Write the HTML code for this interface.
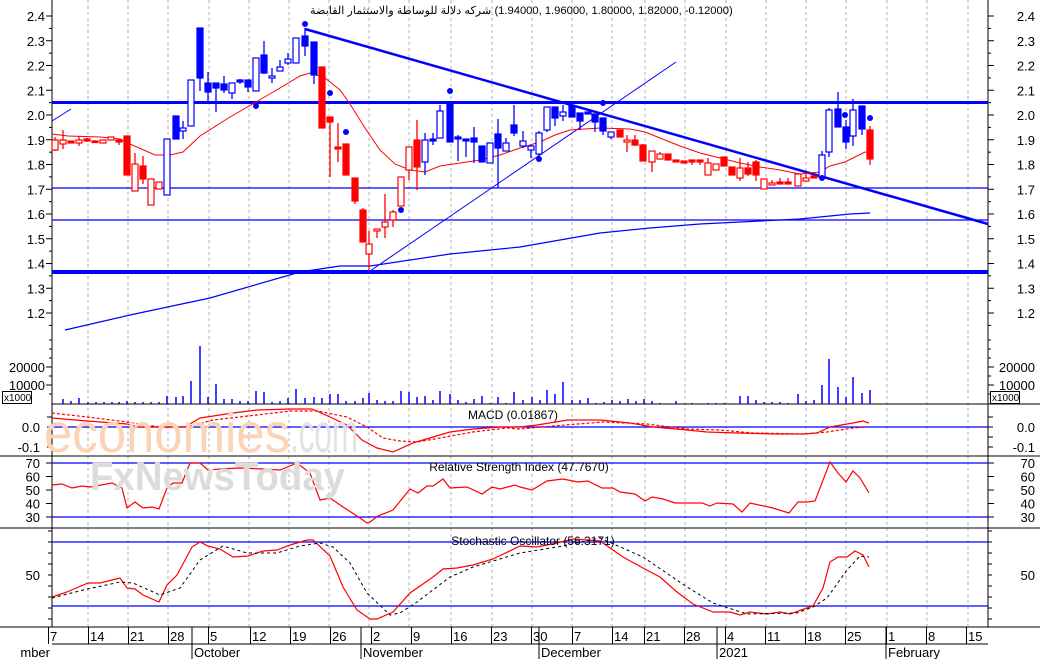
<!DOCTYPE html>
<html><head><meta charset="utf-8"><style>
html,body{margin:0;padding:0;background:#fff;width:1040px;height:659px;overflow:hidden}
svg{display:block}
text{font-family:"Liberation Sans",Arial,sans-serif;}
#title{position:absolute;left:310px;top:4px;font:11.2px "Liberation Sans","Noto Sans CJK SC",sans-serif;color:#000;white-space:nowrap;direction:ltr}
</style></head><body>
<div style="position:relative;width:1040px;height:659px">
<svg id="s" width="1040" height="659" xmlns="http://www.w3.org/2000/svg"></svg>
<div id="title"><span dir="rtl" style="unicode-bidi:isolate">شركه دلالة للوساطة والاستثمار القابضة</span> (1.94000, 1.96000, 1.80000, 1.82000, -0.12000)</div>
</div>
<script>
const S=document.getElementById('s');let h='';
const L=52,R=988;
function line(x1,y1,x2,y2,c,w,d){h+=`<line x1="${x1}" y1="${y1}" x2="${x2}" y2="${y2}" stroke="${c}" stroke-width="${w||1}" ${d?`stroke-dasharray="${d}"`:''}/>`;}
function pl(pts,c,w,d){h+=`<polyline fill="none" points="${pts.map(p=>p.join(',')).join(' ')}" stroke="${c}" stroke-width="${w||1}" ${d?`stroke-dasharray="${d}"`:''}/>`;}
function txt(x,y,t,a,sz,c){h+=`<text x="${x}" y="${y}" font-size="${sz||13}" text-anchor="${a||'start'}" fill="${c||'#000'}">${t}</text>`;}
const grid=[88,128,168,209,249,289,329,369,409,451,492,532,572,612,645,685,726,766,806,846,887,927,968];
grid.forEach(x=>line(x,0,x,627,'#b0b0b0',1,'3,3'));
line(L,0,L,627,'#000');line(R,0,R,627,'#000');
[404,456,528,627].forEach((y,i)=>line(i==0?L:0,y,1040,y,'#000'));
line(L,644,R,644,'#000');
for(let i=0;i<=12;i++){const p=2.4-i*0.1,y=16+i*24.75;if(p<1.15)continue;
 const t=p.toFixed(1);txt(45,y+5,t,'end');txt(1035,y+5,t,'end');
 line(L-6,y,L,y,'#000');line(R,y,R+6,y,'#000');
 line(L-3,y+12.4,L,y+12.4,'#000');line(R,y+12.4,R+3,y+12.4,'#000');}
[[20000,367],[10000,385]].forEach(a=>{txt(45,a[1]+5,a[0],'end');txt(1035,a[1]+5,a[0],'end');line(L-6,a[1],L,a[1],'#000');line(R,a[1],R+6,a[1],'#000');});
[340,349,358,376,394].forEach(y=>{line(L-3,y,L,y,'#000');line(R,y,R+3,y,'#000');});
h+=`<rect x="2.5" y="391.5" width="29" height="12" fill="#fff" stroke="#000"/>`;txt(4,401,'x1000','start',10);
h+=`<rect x="990.5" y="391.5" width="29" height="12" fill="#fff" stroke="#000"/>`;txt(992,401,'x1000','start',10);
txt(40,432,'0.0','end');txt(40,452,'-0.1','end');txt(1035,432,'0.0','end');txt(1035,452,'-0.1','end');
[417,427,437,447].forEach(y=>{line(L-5,y,L,y,'#000');line(R,y,R+5,y,'#000');});
[[70,463],[60,476.5],[50,490],[40,503.5],[30,517]].forEach(a=>{txt(40,a[1]+5,a[0],'end');txt(1035,a[1]+5,a[0],'end');line(L-6,a[1],L,a[1],'#000');line(R,a[1],R+6,a[1],'#000');});
txt(40,580,'50','end');txt(1035,580,'50','end');
[531,542,553,564,575,586,597,608,619].forEach(y=>{line(L-4,y,L,y,'#000');line(R,y,R+4,y,'#000');});
line(L,102.5,R,102.5,'#0000ff',3);line(L,272,R,272,'#0000ff',4);
line(L,188,R,188,'#0000ff',1.2);line(L,220,R,220,'#0000ff',1.2);
line(L,427,R,427,'#0000ff',1.2);line(L,463,R,463,'#0000ff',1.2);line(L,517,R,517,'#0000ff',1.2);
line(L,542,R,542,'#0000ff',1.2);line(L,606,R,606,'#0000ff',1.2);
line(305,29,988,224,'#0000ff',2.5);line(370,271,676,62,'#0000ff',1);line(52,121,71,109,'#0000ff',1);
pl([[65,330],[130,315],[210,298],[300,272],[340,266],[370,266],[450,254],[520,247],[600,233],[650,228],[700,224],[760,221],[800,219],[850,214],[870,213]],'#0000ff',1.2);
pl([[52,134],[68,136],[100,137],[120,139],[130,144],[155,155],[170,155],[183,152],[200,136],[230,117],[256,102],[280,88],[300,76],[310,73],[325,78],[340,90],[350,104],[365,128],[380,150],[395,164],[410,170],[425,172],[440,166],[460,163],[480,160],[500,155],[520,148],[540,142],[555,135],[570,130],[600,128],[630,129],[645,132],[660,138],[680,146],[700,153],[720,158],[740,163],[760,167],[780,170],[800,174],[820,172],[830,166],[845,162],[855,157],[865,152],[870,153]],'#ff0000',1);
const C=[[55,137,151,140,150,'r',0],[63,130,149,140,144,'r',0],[71,141,143,141,143,'r',1],[79,136,146,140,143,'r',0],[87,138,142,139,141,'r',1],[95,140,143,141,142,'r',1],[103,140,143,140,143,'r',0],[111,137,140,137,140,'r',0],[119,139,145,140,142,'r',1],
[127,136,175,136,175,'r',1],[135,153,191,164,191,'r',0],[143,156,184,166,179,'r',1],[151,179,205,179,205,'r',0],[159,182,189,182,189,'r',0],[167,139,195,139,195,'b',0],[176,116,139,116,139,'b',1],[183,121,139,128,131,'b',0],[191,80,126,80,126,'b',0],[200,28,91,28,78,'b',1],
[208,72,102,83,92,'b',1],[216,84,112,83,88,'b',1],[224,76,93,84,90,'b',1],[232,83,99,83,93,'b',0],[240,79,84,80,82,'b',1],[248,80,92,80,87,'b',1],[256,58,91,58,91,'b',0],[264,41,74,55,73,'b',1],[272,68,83,76,78,'b',0],[280,60,71,67,71,'b',0],[288,53,65,59,63,'b',0],[296,38,63,38,63,'b',0],
[305,28,56,36,46,'b',1],[314,42,84,42,75,'b',1],[322,67,128,67,128,'r',1],[330,117,177,117,122,'r',1],[338,123,162,147,149,'r',1],[346,144,175,144,175,'r',1],[355,178,204,178,201,'r',1],[363,208,242,210,242,'r',1],[369,231,270,244,254,'r',0],[377,229,238,229,231,'r',0],[385,194,238,222,227,'r',0],[393,210,227,212,220,'r',0],[401,177,206,177,206,'r',0],[409,147,180,147,170,'r',0],[417,120,190,140,167,'r',1],
[425,133,175,140,162,'b',0],[433,133,145,139,141,'b',1],[440,105,138,111,138,'b',0],[450,103,142,103,142,'b',1],[458,135,161,137,139,'b',1],[466,140,157,139,141,'b',1],[474,127,163,138,142,'b',1],[482,146,162,146,162,'b',1],[490,143,163,143,163,'b',0],[498,119,188,134,148,'b',1],[506,138,151,143,151,'b',0],[514,105,136,125,133,'b',1],
[523,131,148,141,146,'b',0],[531,145,158,146,150,'b',0],[539,131,160,133,154,'b',0],[547,107,132,107,130,'b',0],[555,107,126,107,118,'b',1],[563,105,121,112,116,'b',0],[572,106,117,106,117,'b',1],[580,113,130,113,121,'b',1],[588,112,114,112,114,'b',1],[595,114,132,114,122,'b',1],[603,118,135,118,131,'b',1],[611,132,139,132,137,'b',0],
[620,130,137,130,137,'r',1],[627,135,152,140,142,'r',0],[635,135,146,140,145,'r',1],[643,144,161,145,161,'r',1],[652,151,172,151,162,'r',0],[660,152,159,154,159,'r',0],[668,154,160,154,160,'r',1],[676,160,162,160,162,'r',1],[684,161,163,161,163,'r',1],[692,161,165,160,162,'r',1],[700,160,165,160,162,'r',1],[708,158,175,163,175,'r',0],[716,164,170,164,170,'r',0],[724,157,166,157,166,'r',1],[732,167,175,167,175,'r',1],[740,158,181,168,178,'r',0],[748,162,176,168,174,'r',1],[756,160,181,162,175,'r',1],[764,179,189,179,189,'r',0],[772,180,184,183,185,'r',0],[780,178,184,182,184,'r',1],[788,178,184,182,184,'r',1],[798,174,186,174,186,'r',0],[806,174,181,178,181,'r',0],[814,176,178,176,178,'r',1],
[822,151,177,155,177,'b',0],[829,108,157,110,152,'b',0],[838,92,127,109,127,'b',1],[846,120,149,127,142,'b',1],[853,99,146,110,136,'b',0],[862,106,135,106,129,'b',1],[870,126,165,130,159,'r',1]];
C.forEach(c=>{const col=c[5]=='r'?'#ff0000':'#0000ff';line(c[0],c[1],c[0],c[2],col,1.3);
 const bh=Math.max(c[4]-c[3],1.5);
 h+=`<rect x="${c[0]-3}" y="${c[3]}" width="6" height="${bh}" fill="${c[6]?col:'#fff'}" stroke="${col}" stroke-width="1.2"/>`;});
[[305,24],[200,37],[256,106],[330,93],[346,132],[401,210],[450,91],[539,159],[603,103],[822,178],[845,115],[870,118]].forEach(d=>h+=`<circle cx="${d[0]}" cy="${d[1]}" r="3" fill="#0000ff"/>`);
const V=[[63,399],[71,401],[79,398],[88,402],[96,402],[104,402],[112,402],[119,402],[127,401],[135,402],[143,402],[151,402],[159,402],[167,396],[176,397],[183,396],[191,381],[200,346],[208,397],[216,384],[224,399],[232,399],[240,401],[248,401],[256,391],[264,392],[272,402],[280,401],[288,398],[296,389],[305,398],[314,397],[322,398],[330,394],[338,394],[346,401],[355,401],[363,398],[369,393],[377,400],[385,401],[393,401],[401,391],[409,392],[417,397],[425,396],[433,400],[440,391],[450,394],[458,400],[466,402],[474,399],[482,396],[490,403],[498,397],[506,403],[514,392],[523,400],[532,397],[540,400],[547,390],[555,394],[563,382],[572,400],[580,400],[588,398],[596,403],[604,402],[612,400],[620,401],[628,399],[636,401],[644,399],[652,401],[660,403],[676,401],[692,403],[708,403],[716,403],[724,403],[740,396],[748,396],[756,400],[764,402],[772,402],[780,402],[788,403],[798,394],[806,401],[814,400],[822,385],[829,359],[838,387],[846,397],[853,377],[862,393],[870,390]];
V.forEach(v=>line(v[0],v[1],v[0],404,'#0000ff',1.5));
pl([[52,418],[87,421],[127,424],[138,427],[185,427],[200,418],[233,413],[257,410],[290,409],[312,409],[330,417],[347,425],[362,440],[377,448],[393,452],[413,443],[433,437],[450,432],[473,429],[500,427],[520,427],[537,425],[568,420],[600,420],[630,423],[653,427],[687,430],[707,432],[737,433],[777,434],[803,434],[817,433],[830,427],[853,423],[863,421],[869,423]],'#ff0000',1.2);
pl([[52,413],[87,417],[127,422],[160,427],[187,427],[213,420],[257,415],[290,411],[317,411],[347,417],[367,427],[383,438],[400,441],[417,442],[440,438],[473,432],[507,428],[520,429],[553,426],[603,422],[647,424],[687,429],[720,430],[753,433],[803,434],[827,432],[853,428],[867,427]],'#ff0000',1.2,'3,2');
pl([[52,485],[62,484],[72,488],[82,486],[90,487],[112,483],[122,488],[127,508],[135,502],[143,508],[152,507],[159,509],[167,488],[173,483],[182,483],[190,463],[200,463],[208,470],[220,469],[240,468],[263,469],[280,470],[297,463],[310,473],[320,500],[330,498],[343,507],[360,518],[367,523],[370,522],[378,516],[393,510],[410,489],[418,493],[427,486],[433,486],[443,479],[450,488],[467,487],[482,494],[492,487],[500,489],[515,485],[520,487],[532,490],[547,481],[563,479],[578,482],[588,481],[602,488],[613,488],[620,492],[635,494],[645,501],[652,497],[663,499],[675,503],[702,503],[710,506],[717,503],[733,504],[742,512],[750,503],[773,508],[789,513],[798,502],[807,502],[815,501],[830,462],[838,473],[846,482],[853,471],[860,478],[869,493]],'#ff0000',1.2);
pl([[52,597],[67,592],[88,583],[100,583],[112,580],[120,578],[127,588],[135,589],[143,595],[159,602],[167,585],[177,575],[192,547],[200,542],[208,546],[220,549],[233,557],[248,556],[263,551],[277,550],[290,545],[307,540],[313,540],[330,556],[343,587],[357,610],[370,619],[377,619],[393,612],[410,593],[433,577],[443,569],[457,568],[473,565],[493,559],[520,546],[537,547],[557,543],[573,539],[600,541],[623,557],[643,568],[660,577],[677,592],[693,604],[713,612],[730,612],[740,615],[750,612],[767,614],[780,612],[790,614],[807,608],[813,606],[823,588],[830,562],[838,557],[847,557],[855,551],[863,555],[869,567]],'#ff0000',1.2);
pl([[52,598],[83,590],[120,582],[133,583],[160,595],[180,588],[200,560],[223,546],[247,553],[277,553],[300,546],[320,543],[333,547],[350,563],[367,593],[390,615],[400,613],[417,602],[450,577],[473,567],[520,553],[563,546],[600,538],[643,557],[687,587],[713,603],[747,614],[797,613],[813,607],[827,598],[847,570],[860,556],[869,557]],'#000',1,'3,3');
txt(513,419,'MACD (0.01867)','middle',12);txt(519,471,'Relative Strength Index (47.7670)','middle',12);txt(533,545,'Stochastic Oscillator (56.3171)','middle',12);
h+=`<text x="44" y="452" font-size="56" fill="#fbd3b6" textLength="246" lengthAdjust="spacingAndGlyphs">economies</text>`;
h+=`<text x="290" y="452" font-size="56" fill="#e2e2e2" textLength="68" lengthAdjust="spacingAndGlyphs">.com</text>`;
h+=`<text x="90" y="490" font-size="40" font-weight="bold" fill="#dcdcdc" textLength="255" lengthAdjust="spacingAndGlyphs">FxNewsToday</text>`;
const D=[[50,'7'],[90,'14'],[130,'21'],[170,'28'],[210,'5'],[252,'12'],[292,'19'],[332,'26'],[373,'2'],[413,'9'],[453,'16'],[493,'23'],[533,'30'],[574,'7'],[614,'14'],[646,'21'],[686,'28'],[727,'4'],[767,'11'],[807,'18'],[847,'25'],[888,'1'],[928,'8'],[968,'15']];
D.forEach(d=>{line(d[0]-1.5,627,d[0]-1.5,644,'#000');txt(d[0],641,d[1],'start',13);});
[[192,'October'],[361,'November'],[539,'December'],[717,'2021'],[886,'February']].forEach(m=>{line(m[0],627,m[0],659,'#000');txt(m[0]+2,657,m[1],'start',13);});
txt(50,657,'mber','end',13);
S.innerHTML=h;
</script>
</body></html>
